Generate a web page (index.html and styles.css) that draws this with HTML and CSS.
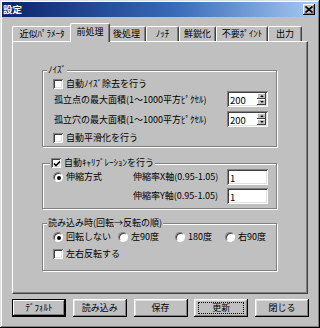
FILE: index.html
```html
<!DOCTYPE html>
<html lang="ja">
<head>
<meta charset="utf-8">
<title>設定</title>
<link rel="stylesheet" href="styles.css">
</head>
<body>
<div class="window">
  <div class="titlebar">
    <span class="title">設定</span>
    <span class="close-btn"><svg width="8" height="7" viewBox="0 0 8 7"><path d="M0.5 0.5L7.5 6.5M7.5 0.5L0.5 6.5" stroke="#000" stroke-width="1.6"/></svg></span>
  </div>
  <div class="content">
    <div class="tabs">
      <div class="tab tab-1">近似ﾊﾟﾗﾒｰﾀ</div>
      <div class="tab tab-active">前処理</div>
      <div class="tab tab-3">後処理</div>
      <div class="tab tab-4">ﾉｯﾁ</div>
      <div class="tab tab-5">鮮鋭化</div>
      <div class="tab tab-6">不要ﾎﾟｲﾝﾄ</div>
      <div class="tab tab-7">出力</div>
    </div>
    <div class="panel">
      <div class="group group-noise">
        <div class="group-title">ﾉｲｽﾞ</div>
        <div class="check-row row-first"><span class="checkbox"></span><span>自動ﾉｲｽﾞ除去を行う</span></div>
        <div class="spin-row">
          <span class="label-indent">孤立点の最大面積(1～1000平方ﾋﾟｸｾﾙ)</span>
          <span class="edit spin"><span class="edit-text">200</span><span class="spin-btns"><span class="spin-btn"><svg width="5" height="3" viewBox="0 0 5 3"><path d="M0 3L2.5 0L5 3Z" fill="#000"/></svg></span><span class="spin-btn"><svg width="5" height="3" viewBox="0 0 5 3"><path d="M0 0L2.5 3L5 0Z" fill="#000"/></svg></span></span></span>
        </div>
        <div class="spin-row spin-row-2">
          <span class="label-indent">孤立穴の最大面積(1～1000平方ﾋﾟｸｾﾙ)</span>
          <span class="edit spin"><span class="edit-text">200</span><span class="spin-btns"><span class="spin-btn"><svg width="5" height="3" viewBox="0 0 5 3"><path d="M0 3L2.5 0L5 3Z" fill="#000"/></svg></span><span class="spin-btn"><svg width="5" height="3" viewBox="0 0 5 3"><path d="M0 0L2.5 3L5 0Z" fill="#000"/></svg></span></span></span>
        </div>
        <div class="check-row row-smooth"><span class="checkbox"></span><span>自動平滑化を行う</span></div>
      </div>

      <div class="group group-calib">
        <div class="group-title title-check"><span class="checkbox checked"><svg width="8" height="8" viewBox="0 0 8 8"><path d="M1 3.5L3 5.5L7 1.5" stroke="#000" stroke-width="1.7" fill="none"/></svg></span><span>自動ｷｬﾘﾌﾞﾚｰｼｮﾝを行う</span></div>
        <div class="calib-grid">
          <div class="check-row calib-mode"><span class="radio checked"></span><span>伸縮方式</span></div>
          <span class="calib-label">伸縮率X軸(0.95-1.05)</span>
          <span class="edit"><span class="edit-text">1</span></span>
          <span class="calib-label calib-y">伸縮率Y軸(0.95-1.05)</span>
          <span class="edit calib-y-edit"><span class="edit-text">1</span></span>
        </div>
      </div>

      <div class="group group-load">
        <div class="group-title">読み込み時(回転→反転の順)</div>
        <div class="radio-row">
          <div class="check-row"><span class="radio checked"></span><span>回転しない</span></div>
          <div class="check-row"><span class="radio"></span><span>左90度</span></div>
          <div class="check-row"><span class="radio"></span><span>180度</span></div>
          <div class="check-row"><span class="radio"></span><span>右90度</span></div>
        </div>
        <div class="check-row row-flip"><span class="checkbox"></span><span>左右反転する</span></div>
      </div>
    </div>
    <div class="buttons">
      <button class="btn btn-default">ﾃﾞﾌｫﾙﾄ</button>
      <button class="btn">読み込み</button>
      <button class="btn">保存</button>
      <button class="btn btn-focus"><span class="focus-ring">更新</span></button>
      <button class="btn">閉じる</button>
    </div>
  </div>
</div>
</body>
</html>
```

FILE: styles.css
```css
* { box-sizing: border-box; }
html, body { margin: 0; padding: 0; }
body {
  width: 320px;
  height: 328px;
  overflow: hidden;
  background: #c0c0c0;
  font-family: "Noto Sans CJK JP", "Noto Sans", sans-serif;
  font-size: 9px;
  line-height: 12px;
  color: #000;
}
.window {
  width: 320px;
  height: 328px;
  background: #c0c0c0;
  padding: 2px 3px 2px 2px;
  box-shadow: inset -1px -1px #000, inset 1px 1px #dfdfdf, inset -2px -2px #808080, inset 2px 2px #fff;
  display: flex;
  flex-direction: column;
}
.titlebar {
  height: 15px;
  flex: none;
  background: linear-gradient(to right, #0a246a 0%, #3a6ab8 55%, #a6caf0 100%);
  display: flex;
  align-items: center;
  justify-content: space-between;
  padding: 0 2px 0 1px;
}
.title {
  color: #fff;
  font-weight: bold;
  font-size: 9.5px;
  line-height: 13px;
}
.close-btn {
  width: 12px;
  height: 11px;
  background: #c0c0c0;
  box-shadow: inset -1px -1px #000, inset 1px 1px #fff, inset -2px -2px #808080;
  display: flex;
  align-items: center;
  justify-content: center;
  padding-right: 1px;
}
.close-btn svg { display: block; }
.content {
  flex: 1;
  padding: 6px 9px 0 10px;
  display: flex;
  flex-direction: column;
}
.tabs {
  height: 18px;
  display: flex;
  align-items: flex-end;
  position: relative;
  z-index: 1;
}
.tab {
  height: 15px;
  border-top: 1px solid #fff;
  border-left: 1px solid #fff;
  border-right: 1px solid #404040;
  border-radius: 2px 2px 0 0;
  box-shadow: inset -1px 0 #808080;
  line-height: 13px;
  text-align: center;
  white-space: nowrap;
}
.tab-1 { width: 60px; }
.tab-3 { width: 38px; }
.tab-4 { width: 33px; }
.tab-5 { width: 37px; }
.tab-6 { width: 52px; }
.tab-7 { width: 34px; }
.tab-active {
  width: 40px;
  height: 19px;
  margin: 0 -2px -1px;
  background: #c0c0c0;
  line-height: 15px;
  position: relative;
  z-index: 2;
}
.tab-active + .tab { border-left: none; }
.panel {
  height: 253px;
  flex: none;
  border-top: 1px solid #fff;
  border-left: 1px solid #fff;
  border-right: 1px solid #404040;
  border-bottom: 1px solid #404040;
  box-shadow: inset -1px -1px #808080;
  padding: 0 0 0 29px;
}
.group {
  width: 235px;
  border: 1px solid #808080;
  box-shadow: inset 1px 1px #fff, 1px 1px #fff;
  padding: 0 8px 0 10px;
}
.group-title {
  width: fit-content;
  height: 12px;
  margin: -7px 0 0 -6px;
  padding: 0 1px;
  background: #c0c0c0;
  display: flex;
  align-items: center;
  gap: 3px;
  white-space: nowrap;
}
.title-check { margin-left: -3px; padding-left: 1px; }
.group-noise { margin-top: 28px; padding-bottom: 2px; }
.group-calib { margin-top: 16px; padding-bottom: 4px; }
.group-load { margin-top: 14px; padding-bottom: 10px; }
.check-row {
  display: flex;
  align-items: center;
  gap: 3px;
  height: 12px;
  white-space: nowrap;
}
.row-first { margin-top: 2px; }
.row-smooth { margin-top: 5px; }
.row-flip { margin-top: 5px; }
.spin-row {
  margin-top: 1px;
  height: 16px;
  display: flex;
  align-items: center;
  justify-content: space-between;
  white-space: nowrap;
}
.spin-row-2 { margin-top: 4px; }
.label-indent { padding-left: 1px; margin-top: 2px; }
.checkbox {
  width: 10px;
  height: 10px;
  flex: none;
  background: #fff;
  box-shadow: inset 1px 1px #808080, inset -1px -1px #fff, inset 2px 2px #404040, inset -2px -2px #dfdfdf;
  display: flex;
  align-items: center;
  justify-content: center;
}
.checkbox svg { display: block; margin: 1px 0 0 1px; }
.radio {
  width: 10px;
  height: 10px;
  flex: none;
  border-radius: 50%;
  background: #fff;
  border: 1px solid;
  border-color: #808080 #fff #fff #808080;
  box-shadow: inset 1px 1px #404040;
  display: flex;
  align-items: center;
  justify-content: center;
}
.radio.checked::after {
  content: "";
  width: 4px;
  height: 4px;
  border-radius: 50%;
  background: #000;
  margin: 1px 0 0 1px;
}
.edit {
  width: 41px;
  height: 16px;
  flex: none;
  background: #fff;
  box-shadow: inset 1px 1px #808080, inset -1px -1px #fff, inset 2px 2px #404040, inset -2px -2px #dfdfdf;
  display: flex;
  align-items: center;
  padding: 1px 2px 0 3px;
  font-size: 9.5px;
}
.edit-text { flex: 1; }
.spin-btns {
  width: 9px;
  height: 12px;
  display: flex;
  flex-direction: column;
  gap: 0;
  margin-top: -1px;
}
.spin-btn {
  height: 6px;
  background: #c0c0c0;
  box-shadow: inset -1px -1px #404040, inset 1px 1px #fff;
  display: flex;
  align-items: center;
  justify-content: center;
}
.spin-btn svg { display: block; width: 4px; height: 2px; }
.calib-grid {
  display: grid;
  grid-template-columns: 80px 1fr 41px;
  grid-template-rows: 16px 16px;
  row-gap: 3px;
  align-items: center;
}
.calib-mode { grid-row: 1; grid-column: 1; }
.calib-label { grid-column: 2; white-space: nowrap; }
.calib-y { grid-row: 2; }
.calib-y-edit { grid-row: 2; grid-column: 3; }
.radio-row {
  margin-top: 2px;
  display: grid;
  grid-template-columns: 65px 57px 50px 1fr;
}
.buttons {
  margin-top: 5px;
  display: flex;
  justify-content: space-between;
  width: 297px;
}
.btn {
  width: 54px;
  height: 18px;
  padding: 0;
  margin: 0;
  border: none;
  background: #c0c0c0;
  font: inherit;
  color: #000;
  line-height: 12px;
  box-shadow: inset -1px -1px #000, inset 1px 1px #fff, inset -2px -2px #808080, inset 2px 2px #dfdfdf;
  display: flex;
  align-items: center;
  justify-content: center;
}
.btn-default {
  box-shadow: inset 0 0 0 1px #000, inset -2px -2px #000, inset 2px 2px #fff, inset -3px -3px #808080;
}
.focus-ring {
  width: 46px;
  height: 12px;
  border: 1px dotted #000;
  display: flex;
  align-items: center;
  justify-content: center;
}
```
